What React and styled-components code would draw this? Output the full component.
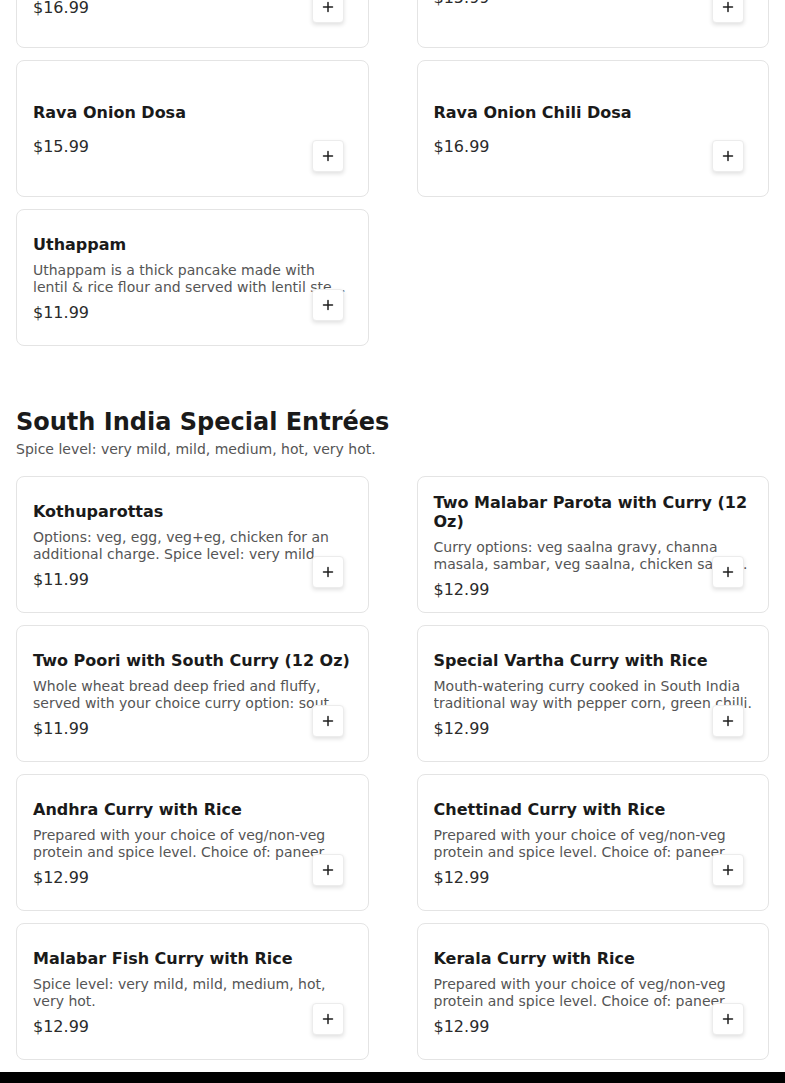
import React from 'react'
import styled, { createGlobalStyle } from 'styled-components'

const dosaItems = [
  { name: 'Rava Masala Dosa with Potato Masala Filling', price: '$16.99' },
  { name: 'Rava Dosa', price: '$15.99' },
  { name: 'Rava Onion Dosa', price: '$15.99' },
  { name: 'Rava Onion Chili Dosa', price: '$16.99' },
  {
    name: 'Uthappam',
    desc: 'Uthappam is a thick pancake made with lentil & rice flour and served with lentil stew and chutney.',
    price: '$11.99',
  },
]

const entreeItems = [
  {
    name: 'Kothuparottas',
    desc: 'Options: veg, egg, veg+eg, chicken for an additional charge. Spice level: very mild, mild, medium, hot, very hot.',
    price: '$11.99',
  },
  {
    name: 'Two Malabar Parota with Curry (12 Oz)',
    desc: 'Curry options: veg saalna gravy, channa masala, sambar, veg saalna, chicken saalna.',
    price: '$12.99',
  },
  {
    name: 'Two Poori with South Curry (12 Oz)',
    desc: 'Whole wheat bread deep fried and fluffy, served with your choice curry option: south curry.',
    price: '$11.99',
  },
  {
    name: 'Special Vartha Curry with Rice',
    desc: 'Mouth-watering curry cooked in South India traditional way with pepper corn, green chilli.',
    price: '$12.99',
  },
  {
    name: 'Andhra Curry with Rice',
    desc: 'Prepared with your choice of veg/non-veg protein and spice level. Choice of: paneer, chicken.',
    price: '$12.99',
  },
  {
    name: 'Chettinad Curry with Rice',
    desc: 'Prepared with your choice of veg/non-veg protein and spice level. Choice of: paneer, chicken.',
    price: '$12.99',
  },
  {
    name: 'Malabar Fish Curry with Rice',
    desc: 'Spice level: very mild, mild, medium, hot, very hot.',
    price: '$12.99',
  },
  {
    name: 'Kerala Curry with Rice',
    desc: 'Prepared with your choice of veg/non-veg protein and spice level. Choice of: paneer, chicken.',
    price: '$12.99',
  },
]

function MenuCard({ item }) {
  return (
    <Card>
      <ItemName>{item.name}</ItemName>
      <ItemDesc>{item.desc}</ItemDesc>
      <Price>{item.price}</Price>
      <AddButton aria-label={'Add ' + item.name}>
        <svg width="12" height="12" viewBox="0 0 12 12">
          <path d="M6 1.5v9M1.5 6h9" stroke="#1f1f1f" strokeWidth="1.5" strokeLinecap="round" />
        </svg>
      </AddButton>
    </Card>
  )
}

export default function App() {
  return (
    <>
      <GlobalStyle />
      <Page>
        <Section>
          <Grid $pull>
            {dosaItems.map((item) => (
              <MenuCard key={item.name} item={item} />
            ))}
          </Grid>
        </Section>
        <Section>
          <SectionTitle>South India Special Entrées</SectionTitle>
          <SectionNote>Spice level: very mild, mild, medium, hot, very hot.</SectionNote>
          <Grid>
            {entreeItems.map((item) => (
              <MenuCard key={item.name} item={item} />
            ))}
          </Grid>
        </Section>
      </Page>
      <Footer />
    </>
  )
}

const GlobalStyle = createGlobalStyle`
  body {
    margin: 0;
    background: #fff;
    font-family: "DejaVu Sans", "Noto Sans", sans-serif;
    color: #1a1a1a;
  }
  * { box-sizing: border-box; }
`
const Page = styled.main`
  padding: 0 16px 12px;
  overflow: hidden;`
const Section = styled.section`
  & + & { margin-top: 62px; }`
const SectionTitle = styled.h2`
  margin: 0;
  font-size: 24px;
  line-height: 29px;
  font-weight: 700;
  color: #1a1a1a;`
const SectionNote = styled.p`
  margin: 4px 0 18px;
  font-size: 14px;
  line-height: 17px;
  color: #555;`
const Grid = styled.div`
  display: grid;
  grid-template-columns: 1fr 1fr;
  column-gap: 48px;
  row-gap: 12px;
  margin-top: ${(p) => (p.$pull ? '-89px' : '0')};`
const Card = styled.div`
  position: relative;
  height: 137px;
  padding: 17px 16px 15px;
  border: 1px solid #e4e4e4;
  border-radius: 8px;
  background: #fff;
  display: flex;
  flex-direction: column;
  justify-content: center;
  & > * { flex-shrink: 0; }`
const ItemName = styled.h3`
  margin: 0 0 8px;
  font-size: 16px;
  line-height: 19px;
  font-weight: 700;
  color: #1a1a1a;`
const ItemDesc = styled.p`
  margin: 0 0 7px;
  font-size: 14px;
  line-height: 17px;
  color: #555;
  display: -webkit-box;
  -webkit-line-clamp: 2;
  -webkit-box-orient: vertical;
  overflow: hidden;`
const Price = styled.span`
  font-size: 16px;
  line-height: 19px;
  color: #2b2b2b;`
const AddButton = styled.button`
  position: absolute;
  right: 24px;
  bottom: 24px;
  width: 32px;
  height: 32px;
  padding: 0;
  border: 1px solid #ececec;
  border-radius: 4px;
  background: #fff;
  box-shadow: 0 2px 4px rgba(0, 0, 0, 0.12);
  display: flex;
  align-items: center;
  justify-content: center;
  cursor: pointer;`
const Footer = styled.footer`
  height: 120px;
  background: #000;`
